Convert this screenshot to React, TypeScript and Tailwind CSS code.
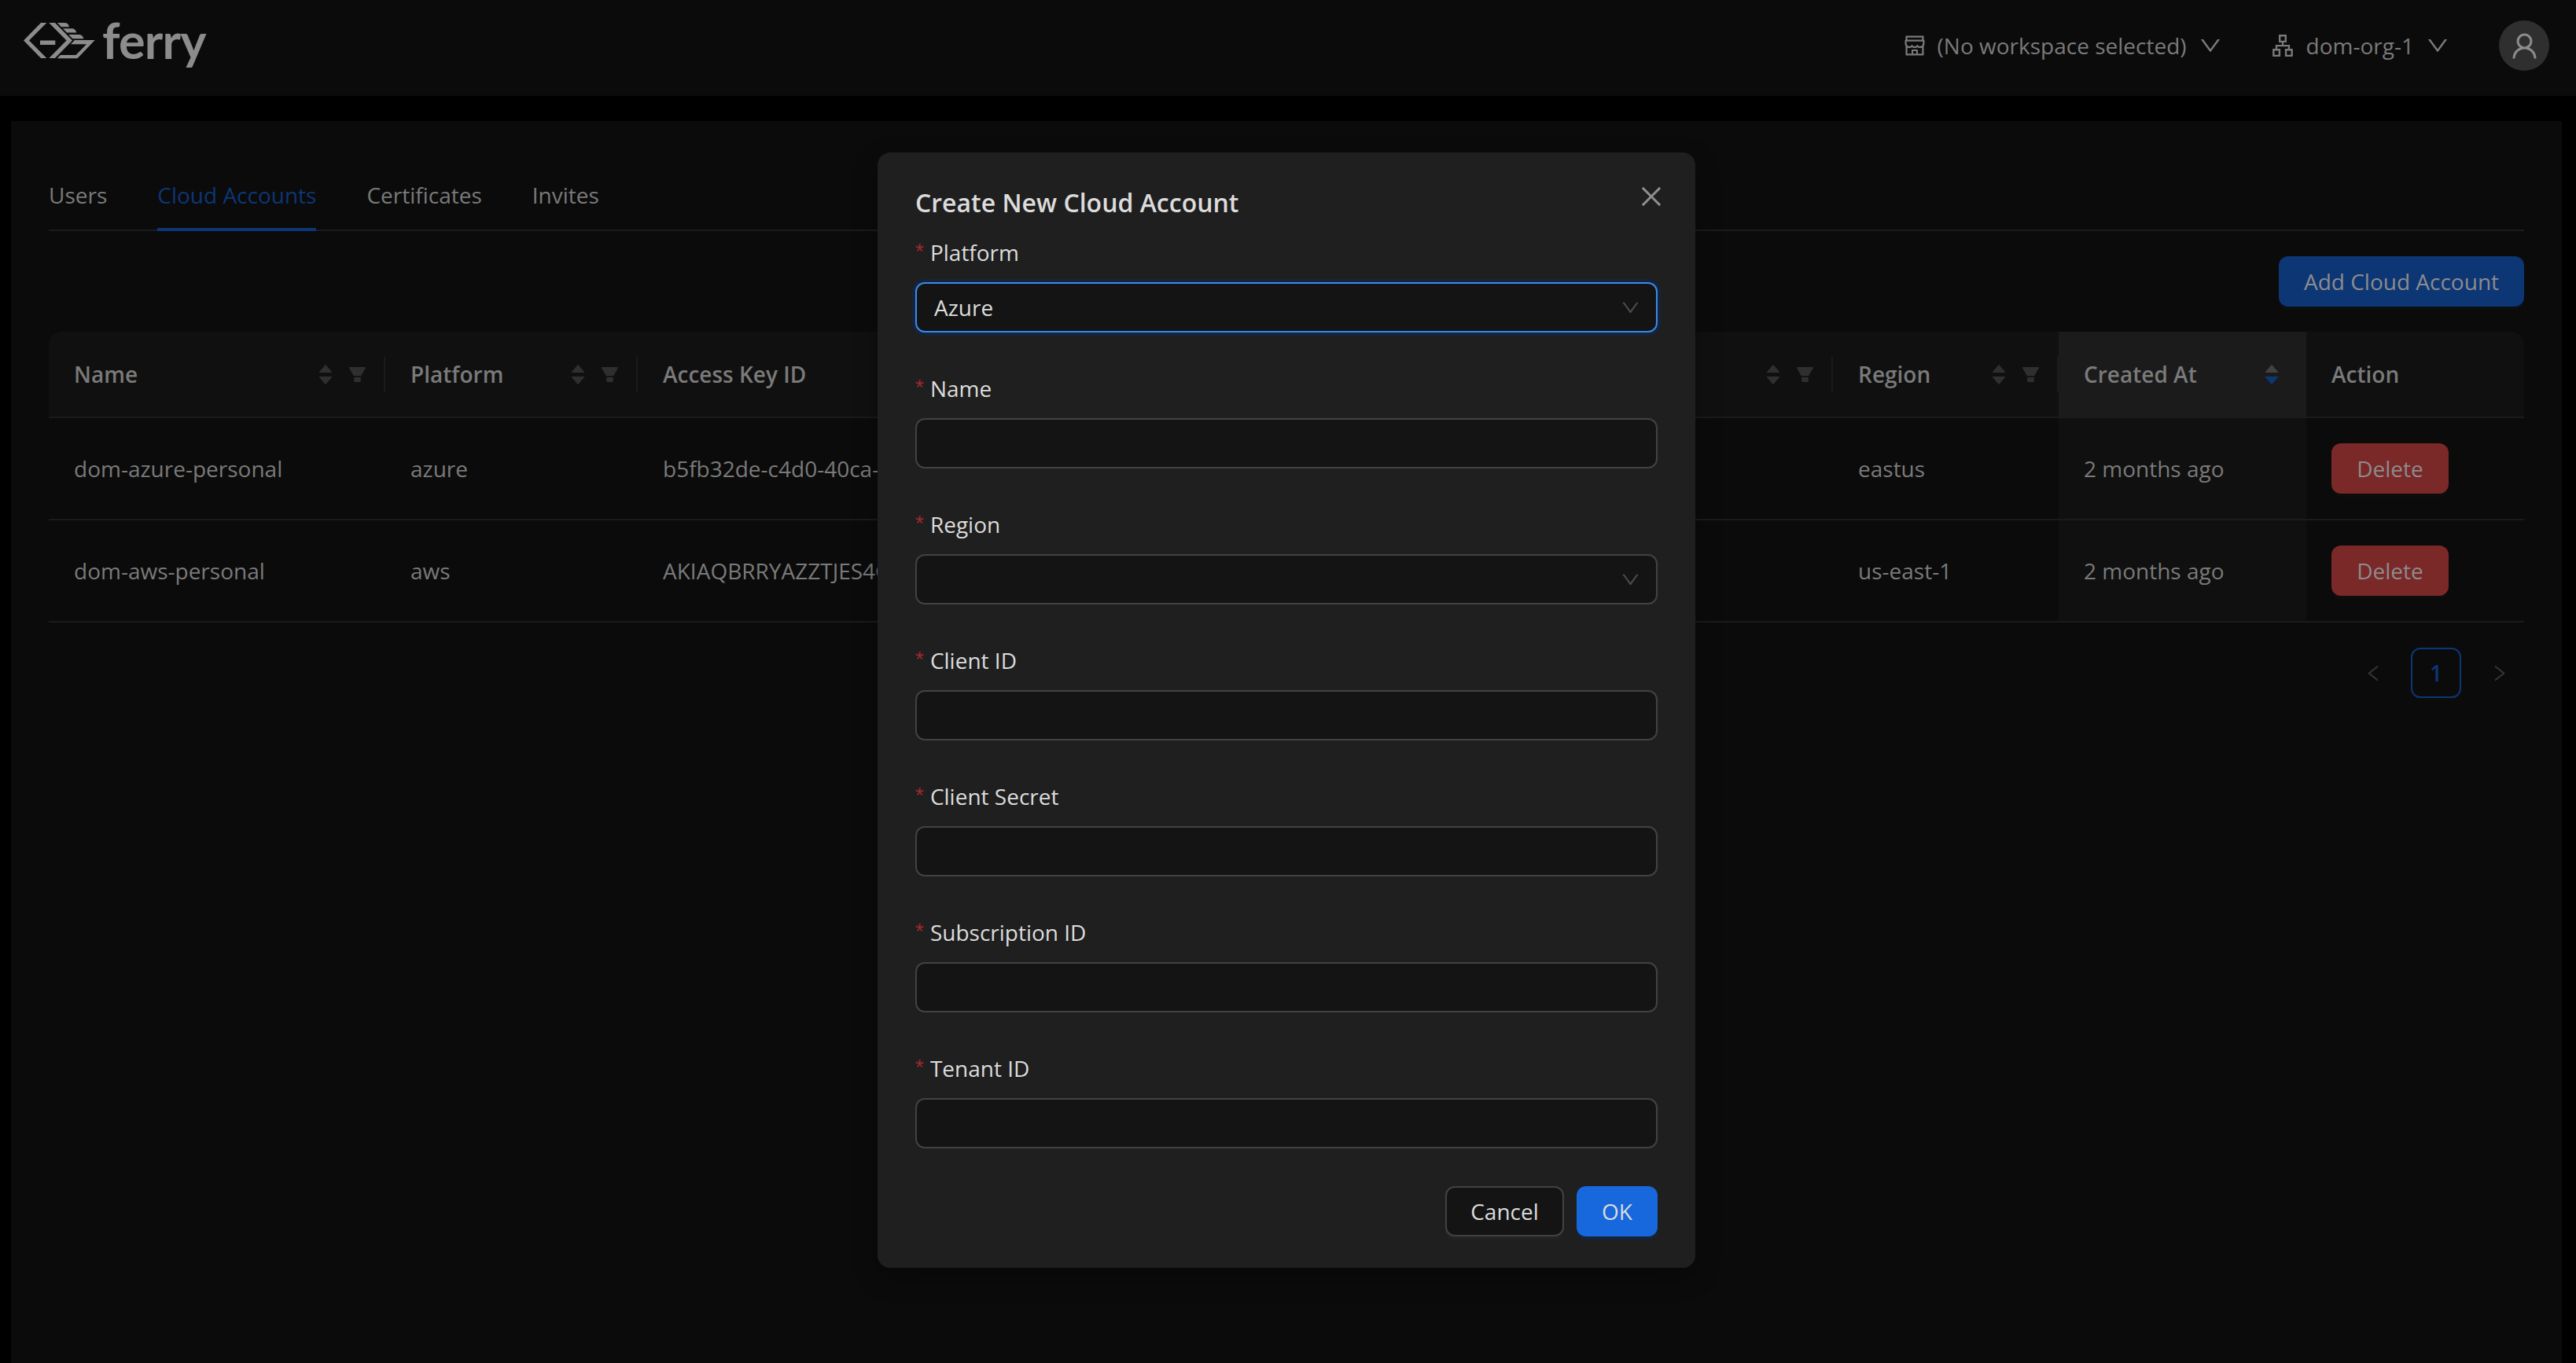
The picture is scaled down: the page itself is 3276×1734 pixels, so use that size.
import type { ReactNode } from 'react'
import {
    AiFillCaretDown,
    AiFillCaretUp,
    AiFillFilter,
    AiOutlineApartment,
    AiOutlineClose,
    AiOutlineDown,
    AiOutlineLeft,
    AiOutlineRight,
    AiOutlineShop,
    AiOutlineUser,
} from 'react-icons/ai'

const accounts = [
    {
        name: 'dom-azure-personal',
        platform: 'azure',
        accessKey: 'b5fb32de-c4d0-40ca-',
        region: 'eastus',
        createdAt: '2 months ago',
    },
    {
        name: 'dom-aws-personal',
        platform: 'aws',
        accessKey: 'AKIAQBRRYAZZTJES4GXQ',
        region: 'us-east-1',
        createdAt: '2 months ago',
    },
]

function Logo() {
    return (
        <div className="flex items-start self-start">
            <svg width="92" height="48" viewBox="0 0 92 48" fill="#8c8c8c" className="mt-[28px] shrink-0">
                <path d="M22 1H29.300L7 23.500L29.300 46H22L0 23.500Z" />
                <path d="M32.300 1H40L62 23.500L40 46H32.300L54.500 23.500Z" />
                <path d="M21 23.500H40.300V29H21Z" />
                <path d="M43 1H52Q57 1 58 6.200H48Z" />
                <path d="M50 8.200H61Q66 8.200 67.300 13.400H55Z" />
                <path d="M57.300 16H70Q75 16 76.500 21.200H62.300Z" />
                <path d="M65 23H90.700L68.500 46.300H42.700L47 42H66.500L80 28.300H60Z" />
            </svg>
            <span className="-mt-[2px] ml-[8px] font-['Lato'] text-[63px] leading-[106px] font-bold tracking-[-0.8px] text-[#8c8c8c]">
                ferry
            </span>
        </div>
    )
}

function Sorter({ active }: { active?: boolean }) {
    return (
        <span className="flex w-[24px] flex-col items-center">
            <AiFillCaretUp size={24} className={active ? 'text-[#414141]' : 'text-[#2f2f2f]'} />
            <AiFillCaretDown size={24} className={active ? '-mt-[9px] text-[#0d3675]' : '-mt-[9px] text-[#2f2f2f]'} />
        </span>
    )
}

interface HeadProps {
    title?: string
    className: string
    divider?: boolean
    filter?: boolean
    sorter?: boolean
    active?: boolean
}

function Head({ title, className, divider, filter, sorter, active }: HeadProps) {
    return (
        <div className={`flex h-[110px] shrink-0 items-center border-b-2 border-[#1b1b1b] pl-[32px] ${className}`}>
            <span className="flex-1 font-semibold whitespace-nowrap">{title}</span>
            {sorter && <Sorter active={active} />}
            {filter && <AiFillFilter size={27} className="mr-[20px] ml-[15px] text-[#2f2f2f]" />}
            {divider && <span className="h-[44px] w-[2px] bg-[#1b1b1b]" />}
        </div>
    )
}

function Cell({ className, children }: { className: string; children?: ReactNode }) {
    return (
        <div className={`flex h-[130px] shrink-0 items-center border-b-2 border-[#1b1b1b] pl-[32px] whitespace-nowrap ${className}`}>
            {children}
        </div>
    )
}

function AccountsTable() {
    return (
        <div className="overflow-hidden rounded-t-[16px]">
            <div className="flex bg-[#101010]">
                <Head title="Name" className="w-[428px]" sorter filter divider />
                <Head title="Platform" className="w-[321px]" sorter filter divider />
                <Head title="Access Key ID" className="w-[760px]" sorter filter divider />
                <Head className="w-[760px]" sorter filter divider />
                <Head title="Region" className="w-[287px]" sorter filter divider />
                <Head title="Created At" className="w-[315px] bg-[#1b1b1b] pr-[32px]" sorter active />
                <Head title="Action" className="w-[277px]" />
            </div>
            {accounts.map((account) => (
                <div key={account.name} className="flex">
                    <Cell className="w-[428px]">{account.name}</Cell>
                    <Cell className="w-[321px]">{account.platform}</Cell>
                    <Cell className="w-[760px]">{account.accessKey}</Cell>
                    <Cell className="w-[760px]" />
                    <Cell className="w-[287px]">{account.region}</Cell>
                    <Cell className="w-[315px] bg-[#101010]">{account.createdAt}</Cell>
                    <Cell className="w-[277px]">
                        <button className="h-[64px] w-[149px] rounded-[12px] bg-[#7a2828] text-[#8c8c8c] shadow-[0_4px_0_#0f0c0c]">
                            Delete
                        </button>
                    </Cell>
                </div>
            ))}
        </div>
    )
}

function Field({ label, children }: { label: string; children?: ReactNode }) {
    return (
        <div className="mb-[48px]">
            <div className="flex h-[44px] items-center">
                <span className="mr-[8px] font-['Liberation_Sans'] text-[28px] leading-[28px] text-[#9b2a30]">*</span>
                <span className="pt-[2px]">{label}</span>
            </div>
            <div className="mt-[17px]">
                {children ?? <input className="block h-[64px] w-full rounded-[12px] border-2 border-[#424242] bg-[#141414]" />}
            </div>
        </div>
    )
}

function CreateAccountModal() {
    return (
        <div className="absolute top-[194px] left-[1116px] h-[1419px] w-[1040px] rounded-[16px] bg-[#1f1f1f] px-[48px] pt-[40px] text-[#dcdcdc] shadow-[0_12px_32px_rgba(0,0,0,0.3)]">
            <div className="flex h-[64px] items-start justify-between">
                <h2 className="text-[32px] leading-[48px] font-semibold">Create New Cloud Account</h2>
                <AiOutlineClose size={36} className="-mt-[2px] -mr-[10px] text-[#8f8f8f]" />
            </div>
            <Field label="Platform">
                <div className="flex h-[64px] items-center justify-between rounded-[12px] border-2 border-[#3c89e8] bg-[#141414] pr-[19px] pl-[22px] shadow-[0_0_0_4px_#15243d]">
                    Azure
                    <AiOutlineDown size={27} className="text-[#4b4b4b]" />
                </div>
            </Field>
            <Field label="Name" />
            <Field label="Region">
                <div className="flex h-[64px] items-center justify-end rounded-[12px] border-2 border-[#424242] bg-[#141414] pr-[19px]">
                    <AiOutlineDown size={27} className="text-[#4b4b4b]" />
                </div>
            </Field>
            <Field label="Client ID" />
            <Field label="Client Secret" />
            <Field label="Subscription ID" />
            <Field label="Tenant ID" />
            <div className="flex justify-end gap-[16px]">
                <button className="h-[64px] w-[151px] rounded-[12px] border-2 border-[#424242] bg-[#141414] shadow-[0_4px_0_#232323]">
                    Cancel
                </button>
                <button className="h-[64px] w-[103px] rounded-[12px] bg-[#1668dc] shadow-[0_4px_0_#15243d]">OK</button>
            </div>
        </div>
    )
}

export default function App() {
    return (
        <div className="relative flex h-[1734px] w-[3276px] flex-col overflow-hidden bg-black font-['Open_Sans',sans-serif] text-[28px] leading-[44px] text-[#7a7a7a]">
            <header className="flex h-[122px] shrink-0 items-center justify-between bg-[#0b0b0b] pr-[34px] pl-[30px]">
                <Logo />
                <div className="-mt-[6px] flex items-center">
                    <AiOutlineShop size={32} />
                    <span className="ml-[13px]">(No workspace selected)</span>
                    <AiOutlineDown size={32} className="ml-[14px]" />
                    <AiOutlineApartment size={32} className="ml-[60px]" />
                    <span className="ml-[14px]">dom-org-1</span>
                    <AiOutlineDown size={32} className="ml-[14px]" />
                    <span className="ml-[62px] flex h-[64px] w-[64px] items-center justify-center rounded-full bg-[#2f2f2f]">
                        <AiOutlineUser size={41} className="text-[#8c8c8c]" />
                    </span>
                </div>
            </header>

            <main className="mt-[32px] mr-[18px] ml-[14px] h-[1580px] shrink-0 bg-[#0b0b0b] px-[48px] pt-[48px]">
                <nav className="flex h-[92px] gap-[64px] border-b-2 border-[#1b1b1b] pt-[24px]">
                    <span>Users</span>
                    <span className="h-[68px] border-b-4 border-[#0d3675] text-[#0d3675]">Cloud Accounts</span>
                    <span>Certificates</span>
                    <span>Invites</span>
                </nav>

                <div className="mt-[32px] mb-[32px] flex justify-end">
                    <button className="h-[64px] w-[312px] rounded-[12px] bg-[#0d3675] text-[#8c8c8c] shadow-[0_4px_0_#0c0e12]">
                        Add Cloud Account
                    </button>
                </div>

                <AccountsTable />

                {/* Pagination */}
                <div className="mt-[32px] flex justify-end gap-[16px]">
                    <span className="flex h-[64px] w-[64px] items-center justify-center text-[#333333]">
                        <AiOutlineLeft size={27} />
                    </span>
                    <span className="flex h-[64px] w-[64px] items-center justify-center rounded-[12px] border-2 border-[#0d3675] font-semibold text-[#0d3675]">
                        1
                    </span>
                    <span className="flex h-[64px] w-[64px] items-center justify-center text-[#333333]">
                        <AiOutlineRight size={27} />
                    </span>
                </div>
            </main>

            <CreateAccountModal />
        </div>
    )
}
